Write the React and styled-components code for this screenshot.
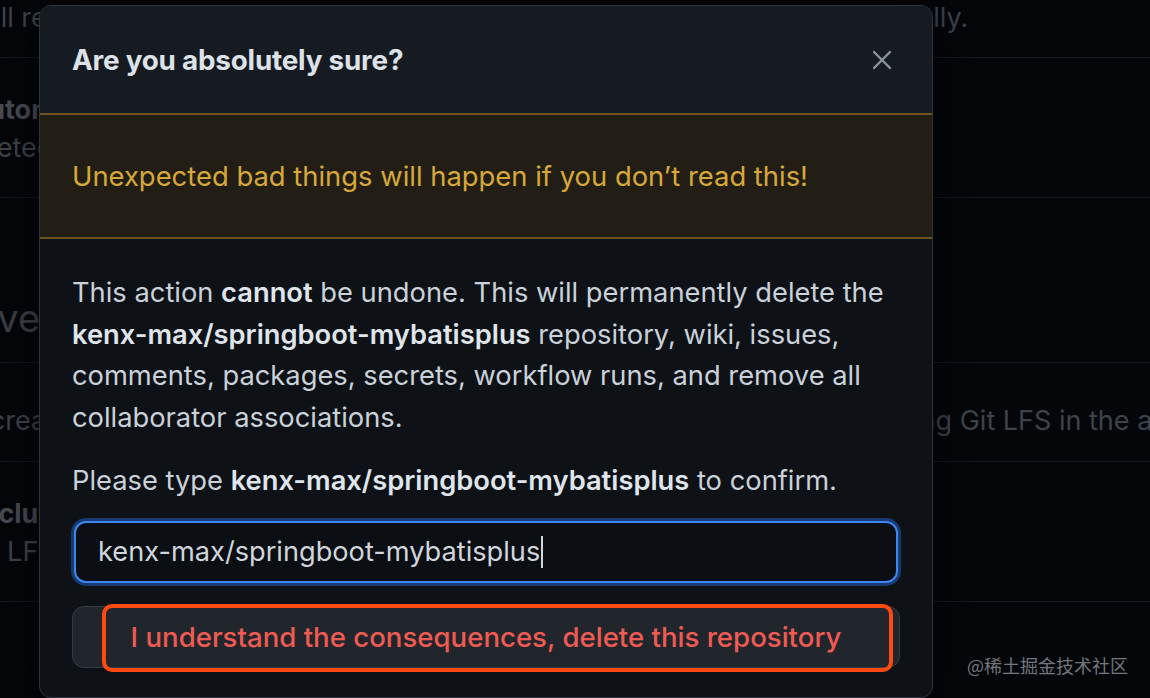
import React from "react";
import styled, { createGlobalStyle } from "styled-components";

const Global = createGlobalStyle`
  html, body { margin: 0; padding: 0; background: #04060a; }
  body { width: 1150px; height: 698px; overflow: hidden; font-family: Inter, "Noto Sans", sans-serif; }
  #root { position: relative; width: 1150px; height: 698px; overflow: hidden; }
`;

/* ---------- background settings page ---------- */
const Page = styled.div`
  margin-left: -92px;
  width: 1500px;
  color: #3e434a;
  font-size: 27px;
`;

const Row = styled.div`
  padding: ${(p) => p.$pad};
  padding-left: ${(p) => p.$indent || 0}px;
  border-bottom: 1px solid #141820;
`;

const Line = styled.div`
  line-height: ${(p) => p.$lh || 38}px;
  font-weight: ${(p) => (p.$bold ? 700 : 400)};
  color: ${(p) => (p.$bold ? "#464b52" : "#3e434a")};
  margin-left: ${(p) => p.$shift || 0}px;
  white-space: nowrap;
`;

const Heading = styled.div`
  font-size: 38px;
  line-height: 50px;
  color: #3a3f46;
  margin-left: -4px;
`;

/* ---------- dialog ---------- */
const Dialog = styled.div`
  position: absolute;
  top: 5px;
  left: 39px;
  width: 894px;
  height: 693px;
  box-sizing: border-box;
  border: 1px solid #30353c;
  border-radius: 12px;
  background: #0e1217;
  overflow: hidden;
  display: flex;
  flex-direction: column;
  box-shadow: 0 8px 40px rgba(0, 0, 0, 0.6);
`;

const Header = styled.div`
  height: 107px;
  flex: none;
  display: flex;
  align-items: center;
  justify-content: space-between;
  padding: 0 32px;
  background: #161b22;
`;

const Title = styled.h2`
  margin: 0;
  font-size: 27.8px;
  font-weight: 700;
  color: #dde2e8;
  letter-spacing: -0.2px;
`;

const CloseBtn = styled.button`
  width: 36px;
  height: 36px;
  display: flex;
  align-items: center;
  justify-content: center;
  border: 0;
  background: transparent;
  padding: 0;
  color: #8b949e;
`;

const Warning = styled.div`
  height: 122px;
  flex: none;
  display: flex;
  align-items: center;
  padding: 0 32px;
  background: #221e16;
  border-top: 2px solid #6e5421;
  border-bottom: 2px solid #6e5421;
  color: #d7a93a;
  font-size: 27.4px;
`;

const Body = styled.div`
  padding: 33px 32px 30px;
  color: #c9d1d9;
  font-size: 27.3px;
  line-height: 41.7px;
`;

const Para = styled.p`
  margin: 0 0 ${(p) => p.$mb || 0}px;
`;

const Strong = styled.strong`
  font-weight: 600;
  color: #dfe5eb;
`;

const Field = styled.div`
  margin-top: 19px;
  height: 62px;
  box-sizing: border-box;
  margin-left: 2px;
  margin-right: 2px;
  border: 2px solid #3c86f2;
  border-radius: 12px;
  box-shadow: 0 0 0 3px #173a70;
  background: #0b0e13;
  display: flex;
  align-items: center;
  padding-left: 22px;
  color: #d0d6dc;
  font-size: 27.2px;
`;

const Caret = styled.span`
  display: inline-block;
  width: 2px;
  height: 32px;
  margin-left: 1px;
  background: #d0d6dc;
`;

const ButtonWrap = styled.div`
  position: relative;
  margin-top: 23px;
`;

const DangerButton = styled.button`
  width: 100%;
  height: 62px;
  box-sizing: border-box;
  border: 1px solid #363b43;
  border-radius: 12px;
  background: #21262d;
  color: #ef5b52;
  font-family: Inter, "Noto Sans", sans-serif;
  font-size: 27.6px;
  font-weight: 500;
  cursor: pointer;
`;

const Annotation = styled.div`
  position: absolute;
  left: 30px;
  top: -2px;
  width: 791px;
  height: 68px;
  box-sizing: border-box;
  border: 4px solid #fe4a0e;
  border-radius: 10px;
  pointer-events: none;
`;

const Watermark = styled.div`
  position: absolute;
  right: 22px;
  top: 652px;
  font-family: "Noto Sans CJK SC", sans-serif;
  font-size: 18px;
  line-height: 26px;
  color: #72777d;
`;

const CloseIcon = () => (
  <svg width="20" height="20" viewBox="0 0 20 20" fill="none" stroke="currentColor" strokeWidth="2.4" strokeLinecap="round">
    <line x1="2" y1="2" x2="18" y2="18" />
    <line x1="18" y1="2" x2="2" y2="18" />
  </svg>
);

export default function App() {
  return (
    <>
      <Global />
      <Page>
        <Row $indent={74} $pad="0 0 22px">
          <Line $lh={35}>All requirements must be met before these pull requests merge automatically.</Line>
        </Row>
        <Row $indent={60} $pad="33px 0 30px">
          <Line $bold>Automatically delete head branches</Line>
          <Line $shift={-13}>Deleted head branches can be restored.</Line>
        </Row>
        <Row $pad="95px 0 19px">
          <Heading>Archives</Heading>
        </Row>
        <Row $pad="39px 0 21px">
          <Line>When creating source code archives, you can choose to include files stored using Git LFS in the archive.</Line>
        </Row>
        <Row $indent={66} $pad="33px 0 30px">
          <Line $bold>Include Git LFS objects in archives</Line>
          <Line $shift={-10}>Git LFS usage in archives is billed.</Line>
        </Row>
        <Row $pad="40px 0 40px">
          <Line>&nbsp;</Line>
        </Row>
      </Page>

      <Dialog role="dialog">
        <Header>
          <Title>Are you absolutely sure?</Title>
          <CloseBtn aria-label="Close">
            <CloseIcon />
          </CloseBtn>
        </Header>
        <Warning>Unexpected bad things will happen if you don’t read this!</Warning>
        <Body>
          <Para $mb={21}>
            This action <Strong>cannot</Strong> be undone. This will permanently delete the{" "}
            <Strong>kenx-max/springboot-mybatisplus</Strong> repository, wiki, issues, comments, packages,
            secrets, workflow runs, and remove all collaborator associations.
          </Para>
          <Para>
            Please type <Strong>kenx-max/springboot-mybatisplus</Strong> to confirm.
          </Para>
          <Field>
            kenx-max/springboot-mybatisplus
            <Caret />
          </Field>
          <ButtonWrap>
            <DangerButton>I understand the consequences, delete this repository</DangerButton>
            <Annotation />
          </ButtonWrap>
        </Body>
      </Dialog>

      <Watermark>@稀土掘金技术社区</Watermark>
    </>
  );
}
